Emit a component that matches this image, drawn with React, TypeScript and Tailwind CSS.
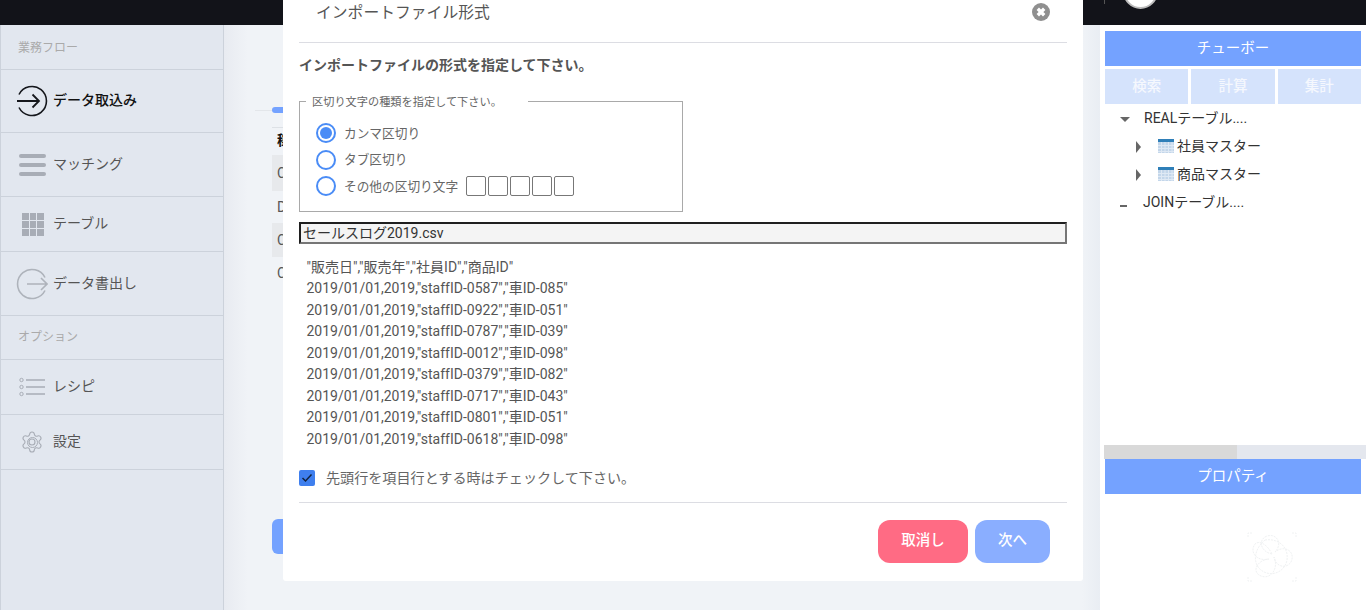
import { Settings } from 'lucide-react';

const font = "[font-family:Roboto,'Noto_Sans_CJK_JP',sans-serif]";

const csvLines = [
  '2019/01/01,2019,"staffID-0587","車ID-085"',
  '2019/01/01,2019,"staffID-0922","車ID-051"',
  '2019/01/01,2019,"staffID-0787","車ID-039"',
  '2019/01/01,2019,"staffID-0012","車ID-098"',
  '2019/01/01,2019,"staffID-0379","車ID-082"',
  '2019/01/01,2019,"staffID-0717","車ID-043"',
  '2019/01/01,2019,"staffID-0801","車ID-051"',
  '2019/01/01,2019,"staffID-0618","車ID-098"',
];

const ImportIcon = () => (
  <svg width="32" height="32" viewBox="0 0 32 32" fill="none" stroke="#15171c" strokeWidth="1.6">
    <path d="M3 9.5A14.5 14.5 0 1 1 3 22.5" />
    <path d="M1 16H23M16.5 9.5L23 16L16.5 22.5" strokeWidth="1.8" />
  </svg>
);

const ExportIcon = () => (
  <svg width="32" height="32" viewBox="0 0 32 32" fill="none" stroke="#aeb3bb" strokeWidth="1.6">
    <path d="M29 9.5A14.5 14.5 0 1 0 29 22.5" />
    <path d="M11 16H31M25 10L31 16L25 22" strokeWidth="1.6" />
  </svg>
);

const MenuIcon = () => (
  <div className="flex w-[27px] flex-col gap-[5px]">
    <div className="h-1 rounded-full bg-[#a8adb6]" />
    <div className="h-1 rounded-full bg-[#a8adb6]" />
    <div className="h-1 rounded-full bg-[#a8adb6]" />
  </div>
);

const GridIcon = () => (
  <div className="ml-[2px] grid w-[22px] grid-cols-3 gap-px">
    {Array.from({ length: 9 }).map((_, i) => (
      <div key={i} className="h-[7px] bg-[#a8adb6]" />
    ))}
  </div>
);

const RecipeIcon = () => (
  <svg width="27" height="20" viewBox="0 0 27 20" fill="none" stroke="#a8adb6">
    <circle cx="2.5" cy="3" r="1.7" />
    <circle cx="2.5" cy="10" r="1.7" />
    <circle cx="2.5" cy="17" r="1.7" />
    <path d="M7 3H26M7 10H26M7 17H26" strokeWidth="1.4" />
  </svg>
);

const GearIcon = () => (
  <div className="relative flex h-6 w-6 items-center justify-center">
    <Settings size={24} strokeWidth={1.1} className="text-[#a8adb6]" />
    <div className="absolute h-[11px] w-[11px] rounded-full border border-[#a8adb6]" />
  </div>
);

const TableIcon = () => (
  <svg width="16" height="14" viewBox="0 0 16 14">
    <rect width="16" height="14" fill="#c3d6ea" />
    <rect width="16" height="3" fill="#2f7fb8" />
    <path d="M3.5 3V14M7 3V14M10.5 3V14M14 3V14M0 6.5H16M0 9.5H16M0 12.5H16" stroke="#dfe9f4" strokeWidth="1" />
  </svg>
);

const SwirlMark = () => (
  <svg width="50" height="50" viewBox="0 0 50 50" fill="none" stroke="#f0f2f3" strokeWidth="1" strokeDasharray="2 1">
    <path d="M5 1H1V5M45 1H49V5M5 49H1V45M45 49H49V45" />
    <path d="M25 22C14 20 10 8 20 4C30 1 36 12 28 20C38 12 49 20 44 30C39 38 28 34 27 25C32 36 24 48 14 44C4 40 10 28 22 27C10 30 2 20 8 12C12 8 20 12 25 22Z" />
    <path d="M18 8C30 6 42 14 40 28C38 40 24 46 14 38C6 32 6 18 18 8Z" />
  </svg>
);

const SideItem = ({
  icon,
  label,
  height,
  active,
}: {
  icon: React.ReactNode;
  label: string;
  height: string;
  active?: boolean;
}) => (
  <div className={`flex items-center border-b-[1px] border-[#ccd2db] ${height}`}>
    <div className="flex w-[52px] shrink-0 justify-center pl-[12px] pr-[2px]">{icon}</div>
    <span className={`mt-[-1px] text-[14px] ${active ? 'font-medium text-[#111]' : 'text-[#555]'}`}>{label}</span>
  </div>
);

const Radio = ({ label, checked }: { label: string; checked?: boolean }) => (
  <div className="flex h-[26.5px] items-center">
    <div className="flex h-5 w-5 items-center justify-center rounded-full border-2 border-[#4a8cf6] bg-white">
      {checked && <div className="h-3 w-3 rounded-full bg-[#4a8cf6]" />}
    </div>
    <span className="ml-2 text-[12.7px] text-[#666]">{label}</span>
  </div>
);

const TreeRow = ({ label }: { label: string }) => (
  <div className="flex h-7 items-center pl-[36px]">
    <div className="mt-[2px] h-0 w-0 border-y-[6px] border-l-[5px] border-y-transparent border-l-[#666]" />
    <div className="ml-[17px] mr-[3px]">
      <TableIcon />
    </div>
    <span className="text-[14px] text-[#333]">{label}</span>
  </div>
);

export default function App() {
  return (
    <div className={`relative flex h-[610px] w-[1366px] flex-col overflow-hidden bg-[#f0f3f7] ${font}`}>
      <header className="relative h-[25px] shrink-0 bg-[#121319]">
        <div className="absolute left-[1104px] top-0 h-1 w-px bg-[#555]" />
        <div className="absolute left-[1123px] top-[-26px] h-[35px] w-[35px] rounded-full border-2 border-[#bbb] bg-white" />
      </header>

      <div className="flex min-h-0 flex-1">
        <aside className="w-[224px] shrink-0 border-x border-[#ccd2db] bg-[#e2e7ef]">
          <div className="flex h-[45px] items-center border-b border-[#ccd2db] pl-[17px] pt-[2px] text-[12px] text-[#aaa]">業務フロー</div>
          <SideItem icon={<ImportIcon />} label="データ取込み" height="h-[63px]" active />
          <SideItem icon={<MenuIcon />} label="マッチング" height="h-[64px]" />
          <SideItem icon={<GridIcon />} label="テーブル" height="h-[55px]" />
          <SideItem icon={<ExportIcon />} label="データ書出し" height="h-[64px]" />
          <div className="flex h-[44px] items-center border-b border-[#ccd2db] pl-[17px] pb-[2px] text-[12px] text-[#aaa]">オプション</div>
          <SideItem icon={<RecipeIcon />} label="レシピ" height="h-[55px]" />
          <SideItem icon={<GearIcon />} label="設定" height="h-[55px]" />
        </aside>

        <main className="flex min-w-0 flex-1 flex-col bg-[linear-gradient(to_right,#e8ebf1_0,#f0f3f7_24px,#f0f3f7_calc(100%-18px),#e9edf3_100%)] pl-[48px] pt-[82px]">
          <div className="relative h-[6px] w-[30px] rounded-l-full bg-[#74a2ff]">
            <div className="absolute left-[-17px] top-[3px] h-px w-[17px] bg-[#e3e6ea]" />
          </div>
          <div className="mt-[14px] w-[30px] border-t border-[#dde1e6] text-[14px] text-[#333]">
            <div className="h-[27px] pl-[5px] pt-[2px] font-bold text-[#111]">稼</div>
            <div className="flex h-9 items-center bg-[#e7e9ec] pl-[5px] text-[#555]">C</div>
            <div className="flex h-8 items-center pl-[5px] text-[#555]">D</div>
            <div className="flex h-[34px] items-center bg-[#e7e9ec] pl-[5px] text-[#555]">C</div>
            <div className="flex h-8 items-center pl-[5px] text-[#555]">C</div>
          </div>
          <div className="mt-[230px] h-[35px] w-[30px] rounded-l-[6px] bg-[#74a2ff]" />
        </main>

        <aside className="flex w-[266px] shrink-0 flex-col bg-white pt-[6px]">
          <div className="mx-[5px] flex h-[35px] items-center justify-center bg-[#74a2ff] text-[14.5px] text-white">チューボー</div>
          <div className="mx-[5px] mt-[3px] grid grid-cols-3 gap-[3px]">
            {['検索', '計算', '集計'].map((t) => (
              <div key={t} className="flex h-[35px] items-center justify-center bg-[#d5e3fc] text-[14.5px] font-medium text-[#f5f8fe]">
                {t}
              </div>
            ))}
          </div>
          <div className="flex h-7 items-center pl-[20px] text-[14px] text-[#333]">
            <div className="mt-[2px] h-0 w-0 border-x-[5px] border-t-[5px] border-x-transparent border-t-[#666]" />
            <span className="ml-[14px]">REALテーブル....</span>
          </div>
          <TreeRow label="社員マスター" />
          <TreeRow label="商品マスター" />
          <div className="flex h-7 items-center pl-[20px] text-[14px] text-[#333]">
            <div className="mt-[8px] h-[2px] w-[7px] bg-[#666]" />
            <span className="ml-[16px]">JOINテーブル....</span>
          </div>
          <div className="mt-[229px] ml-[4px] flex h-[14px] bg-[#e4e7ee]">
            <div className="h-full w-[133px] bg-[#d9d9d9]" />
          </div>
          <div className="mx-[5px] flex h-[35px] items-center justify-center bg-[#74a2ff] text-[14.5px] text-white">プロパティ</div>
          <div className="mt-[38px] flex justify-center pl-[78px]">
            <SwirlMark />
          </div>
        </aside>
      </div>

      <div className="absolute left-[283px] top-0 flex h-[581px] w-[800px] flex-col rounded-b-[3px] bg-white px-4">
        <div className="flex h-[43px] items-start justify-between border-b border-[#dcdde3] pl-[17px] pr-[17px]">
          <span className="mt-[1px] text-[15.8px] leading-[24px] text-[#555]">インポートファイル形式</span>
          <svg width="18" height="18" viewBox="0 0 18 18" className="mt-[3px]">
            <circle cx="9" cy="9" r="9" fill="#8f8f8f" />
            <path d="M5.8 5.8L12.2 12.2M12.2 5.8L5.8 12.2" stroke="#fff" strokeWidth="3.4" />
          </svg>
        </div>
        <p className="mt-[12px] text-[14px] font-bold leading-[20px] text-[#555]">インポートファイルの形式を指定して下さい。</p>

        <fieldset className="mt-[17px] h-[120px] w-[384px] border border-[#a9a9a9] pl-4 pt-[10px]">
          <legend className="ml-[-10px] pl-[6px] pr-[26px] pt-[4px] text-[11.2px] leading-[14px] text-[#666]">区切り文字の種類を指定して下さい。</legend>
          <Radio label="カンマ区切り" checked />
          <Radio label="タブ区切り" />
          <div className="flex items-center">
            <Radio label="その他の区切り文字" />
            <div className="ml-2 flex gap-[2px]">
              {[0, 1, 2, 3, 4].map((i) => (
                <div key={i} className="h-5 w-5 rounded-[2px] border border-[#777]" />
              ))}
            </div>
          </div>
        </fieldset>

        <div className="mt-[10px] flex h-[22px] items-center border-2 border-b-[#767676] border-l-[#1f1f1f] border-r-[#767676] border-t-[#1f1f1f] bg-[#f4f4f4] pl-[2px] text-[14px] text-[#333]">
          セールスログ2019.csv
        </div>

        <div className="mt-[12.5px] pb-[0.5px] pl-[7.5px] text-[14px] leading-[21.5px] text-[#555]">
          <div>"販売日","販売年","社員ID","商品ID"</div>
          {csvLines.map((l, i) => (
            <div key={i}>{l}</div>
          ))}
        </div>

        <div className="mt-[17px] flex items-center">
          <div className="flex h-4 w-4 items-center justify-center rounded-[2px] bg-[#3f7fee]">
            <svg width="12" height="10" viewBox="0 0 12 10" fill="none" stroke="#12233f" strokeWidth="1.5">
              <path d="M1.5 5L4.5 8L10.5 1.5" />
            </svg>
          </div>
          <span className="ml-[11px] text-[14.1px] text-[#666]">先頭行を項目行とする時はチェックして下さい。</span>
        </div>

        <div className="mt-[13px] flex justify-end gap-[7px] border-t border-[#dcdde3] pr-[17px] pt-[17px]">
          <button className="h-[43px] w-[90px] rounded-[12px] bg-[#ff6b84] text-[14.5px] font-medium text-white">取消し</button>
          <button className="h-[43px] w-[75px] rounded-[12px] bg-[#8aaeff] text-[14.5px] font-medium text-white">次へ</button>
        </div>
      </div>
    </div>
  );
}
